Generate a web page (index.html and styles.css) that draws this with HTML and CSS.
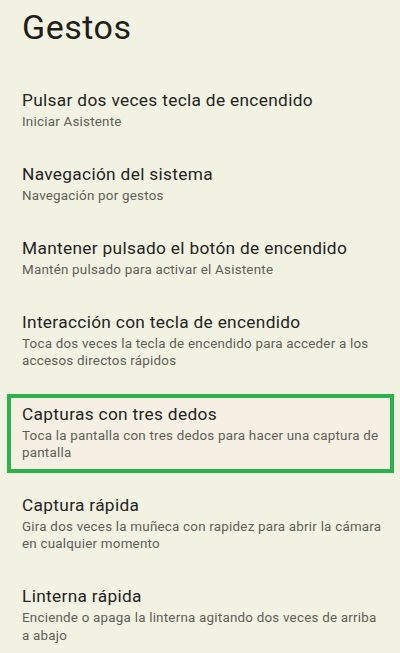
FILE: index.html
```html
<!DOCTYPE html>
<html lang="es">
<head>
<meta charset="utf-8">
<title>Gestos</title>
<link rel="stylesheet" href="styles.css">
</head>
<body>
<main class="page">
  <h1 class="page-title">Gestos</h1>
  <ul class="settings">
    <li class="setting">
      <div class="setting-title">Pulsar dos veces tecla de encendido</div>
      <div class="setting-sub">Iniciar Asistente</div>
    </li>
    <li class="setting">
      <div class="setting-title">Navegación del sistema</div>
      <div class="setting-sub">Navegación por gestos</div>
    </li>
    <li class="setting">
      <div class="setting-title">Mantener pulsado el botón de encendido</div>
      <div class="setting-sub">Mantén pulsado para activar el Asistente</div>
    </li>
    <li class="setting">
      <div class="setting-title">Interacción con tecla de encendido</div>
      <div class="setting-sub">Toca dos veces la tecla de encendido para acceder a los accesos directos rápidos</div>
    </li>
    <li class="setting setting-highlight">
      <div class="setting-title">Capturas con tres dedos</div>
      <div class="setting-sub">Toca la pantalla con tres dedos para hacer una captura de pantalla</div>
    </li>
    <li class="setting">
      <div class="setting-title">Captura rápida</div>
      <div class="setting-sub">Gira dos veces la muñeca con rapidez para abrir la cámara en cualquier momento</div>
    </li>
    <li class="setting">
      <div class="setting-title">Linterna rápida</div>
      <div class="setting-sub">Enciende o apaga la linterna agitando dos veces de arriba a abajo</div>
    </li>
  </ul>
</main>
</body>
</html>
```
FILE: styles.css
```css
html, body {
  margin: 0;
  padding: 0;
  background: #f2f2e3;
}
body {
  font-family: Roboto, "Noto Sans", "Liberation Sans", sans-serif;
  color: #1c1c17;
  width: 400px;
  height: 653px;
  overflow: hidden;
}
.page {
  padding-top: 7px;
}
.page-title {
  margin: 0;
  padding-left: 22px;
  font-size: 34px;
  font-weight: 400;
  line-height: 40px;
  letter-spacing: 0.5px;
  color: #1d1e18;
}
.settings {
  list-style: none;
  margin: 24.6px 0 0;
  padding: 0;
}
.setting {
  position: relative;
  padding: 17px 18px 16px 22px;
}
.setting-title {
  position: relative;
  z-index: 1;
  font-size: 17.3px;
  line-height: 22px;
  letter-spacing: 0.32px;
  color: #24241f;
}
.setting-sub {
  position: relative;
  z-index: 1;
  margin-top: 2px;
  font-size: 13.4px;
  line-height: 17.2px;
  letter-spacing: 0.22px;
  color: #5e5e57;
}
.setting-highlight::after {
  content: "";
  position: absolute;
  top: 8px;
  bottom: 4px;
  left: 7px;
  right: 6px;
  border: 4px solid #2db24b;
  background: #f5f0e3;
  z-index: 0;
}
```
